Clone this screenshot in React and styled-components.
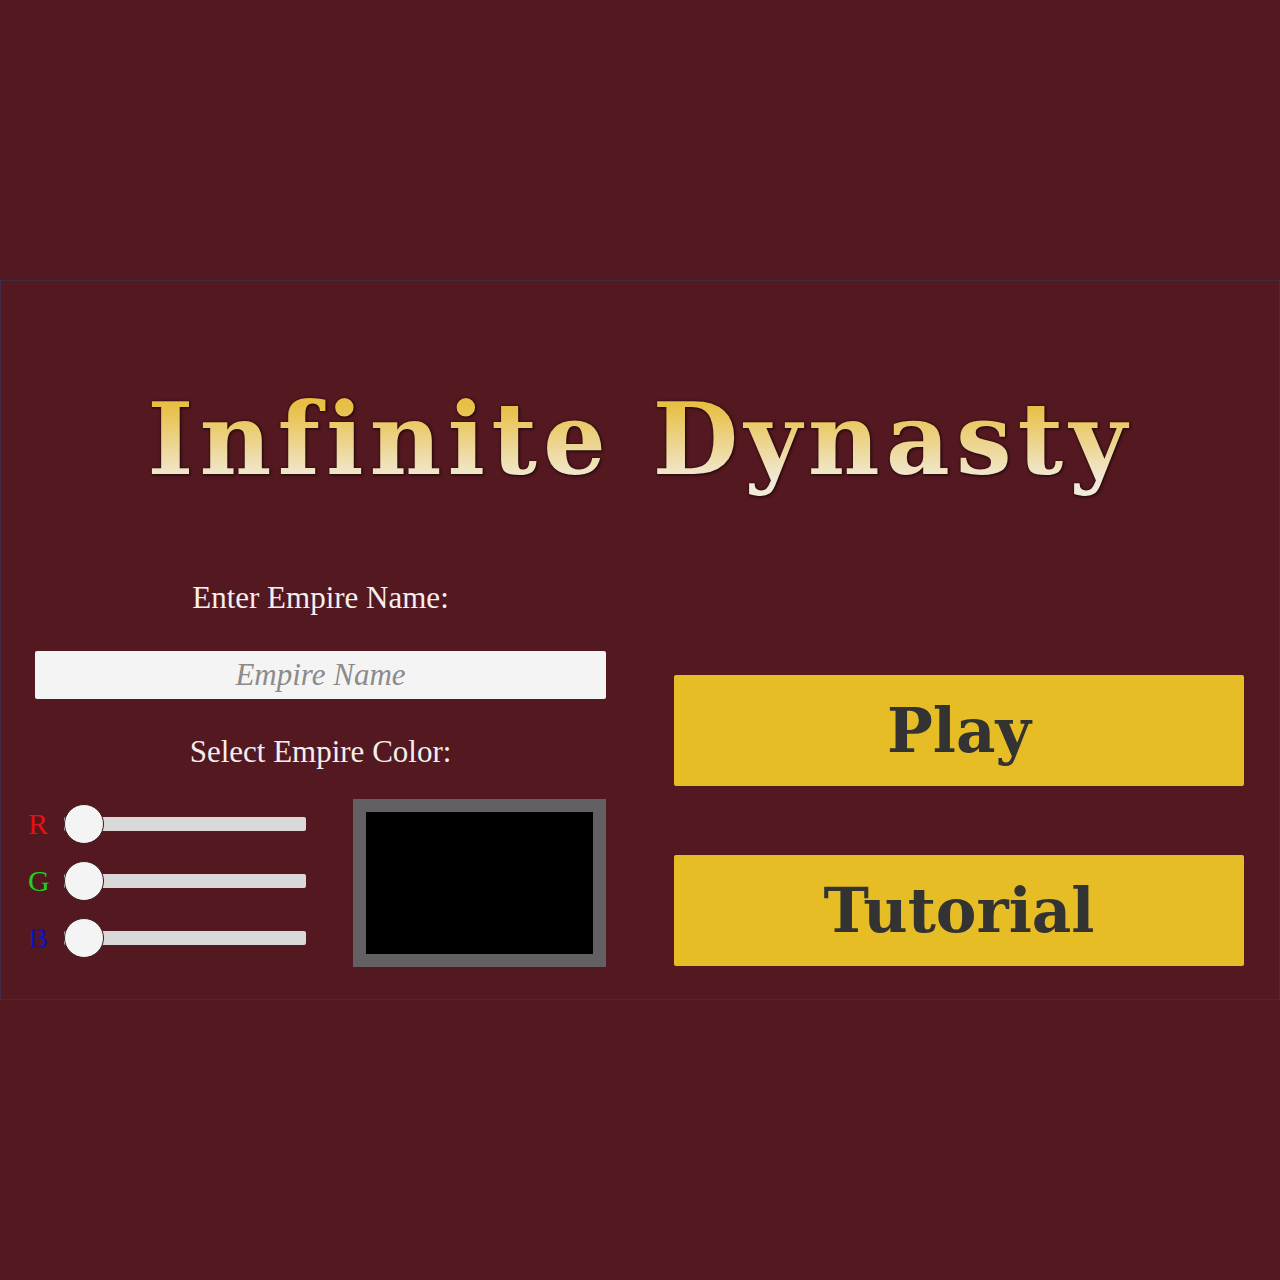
import React, { useState } from "react";
import styled, { createGlobalStyle } from "styled-components";

const Global = createGlobalStyle`
  html, body { margin: 0; padding: 0; background: #531820; }
  body { width: 1280px; height: 1280px; font-family: "Liberation Serif", "DejaVu Serif", serif; }
  #root { height: 1280px; display: flex; align-items: center; }
`;

const Panel = styled.div`
  box-sizing: border-box;
  width: 1280px;
  height: 720px;
  border: 1px solid #3f2a47;
  background: #531820;
  display: flex;
  flex-direction: column;
`;

const Title = styled.h1`
  margin: 98px 0 0 0;
  height: 120px;
  text-align: center;
  font-family: "DejaVu Serif", serif;
  font-weight: bold;
  font-size: 99px;
  line-height: 120px;
  letter-spacing: 6px;
  background: linear-gradient(to bottom, #e8bf44 22%, #f1ead9 85%);
  -webkit-background-clip: text;
  background-clip: text;
  color: transparent;
  filter: drop-shadow(0 0 1px #2a0a0e) drop-shadow(1px 1px 1px #2a0a0e);
`;

const Columns = styled.div`
  display: grid;
  grid-template-columns: 1fr 1fr;
  margin-top: 82px;
`;

const LeftCol = styled.div`
  padding: 0 34px;
  display: flex;
  flex-direction: column;
  align-items: stretch;
`;

const Label = styled.div`
  text-align: center;
  color: #f5eeee;
  font-size: 31px;
  line-height: 34px;
  margin-top: ${(p) => p.$mt || 0}px;
`;

const NameInput = styled.input`
  box-sizing: border-box;
  height: 48px;
  margin-top: 36px;
  border: none;
  border-radius: 2px;
  background: #f4f4f4;
  font-family: "Liberation Serif", serif;
  font-size: 31px;
  text-align: center;
  color: #333;
  outline: none;
  &::placeholder {
    color: #8b8b8b;
    font-style: italic;
  }
`;

const ColorRow = styled.div`
  display: flex;
  justify-content: space-between;
  margin-top: 30px;
`;

const Sliders = styled.div`
  display: flex;
  flex-direction: column;
  gap: 17px;
  padding-top: 5px;
  margin-left: -7px;
`;

const SliderRow = styled.div`
  display: flex;
  align-items: center;
  height: 40px;
`;

const ChannelLabel = styled.span`
  width: 36px;
  font-size: 30px;
  line-height: 40px;
  color: ${(p) => p.$color};
`;

const Range = styled.input`
  -webkit-appearance: none;
  appearance: none;
  width: 242px;
  height: 40px;
  margin: 0;
  background: transparent;
  &::-webkit-slider-runnable-track {
    height: 14px;
    background: #d9d9d9;
    border-radius: 2px;
  }
  &::-webkit-slider-thumb {
    -webkit-appearance: none;
    width: 40px;
    height: 40px;
    margin-top: -13px;
    border-radius: 50%;
    background: #f4f4f4;
    border: 1.5px solid #3a1a1a;
    box-sizing: border-box;
  }
`;

const Swatch = styled.div`
  box-sizing: border-box;
  width: 253px;
  height: 168px;
  border: 13px solid #626062;
  background: ${(p) => p.$bg};
`;

const RightCol = styled.div`
  padding: 94px 35px 0 34px;
  display: flex;
  flex-direction: column;
  gap: 69px;
`;

const Button = styled.button`
  height: 111px;
  border: none;
  border-radius: 2px;
  background: #e6bd24;
  color: #333333;
  font-family: "DejaVu Serif", serif;
  font-weight: bold;
  font-size: 61px;
  cursor: pointer;
  padding: 0;
`;

export default function App() {
  const [rgb, setRgb] = useState([0, 0, 0]);
  const set = (i) => (e) => {
    const n = [...rgb];
    n[i] = Number(e.target.value);
    setRgb(n);
  };
  const channels = [
    ["R", "#e80f0f"],
    ["G", "#22cc22"],
    ["B", "#1010c8"],
  ];
  return (
    <>
      <Global />
      <Panel>
        <Title>Infinite Dynasty</Title>
        <Columns>
          <LeftCol>
            <Label>Enter Empire Name:</Label>
            <NameInput placeholder="Empire Name" />
            <Label $mt={36}>Select Empire Color:</Label>
            <ColorRow>
              <Sliders>
                {channels.map(([c, col], i) => (
                  <SliderRow key={c}>
                    <ChannelLabel $color={col}>{c}</ChannelLabel>
                    <Range type="range" min="0" max="255" value={rgb[i]} onChange={set(i)} />
                  </SliderRow>
                ))}
              </Sliders>
              <Swatch $bg={`rgb(${rgb[0]},${rgb[1]},${rgb[2]})`} />
            </ColorRow>
          </LeftCol>
          <RightCol>
            <Button>Play</Button>
            <Button>Tutorial</Button>
          </RightCol>
        </Columns>
      </Panel>
    </>
  );
}
